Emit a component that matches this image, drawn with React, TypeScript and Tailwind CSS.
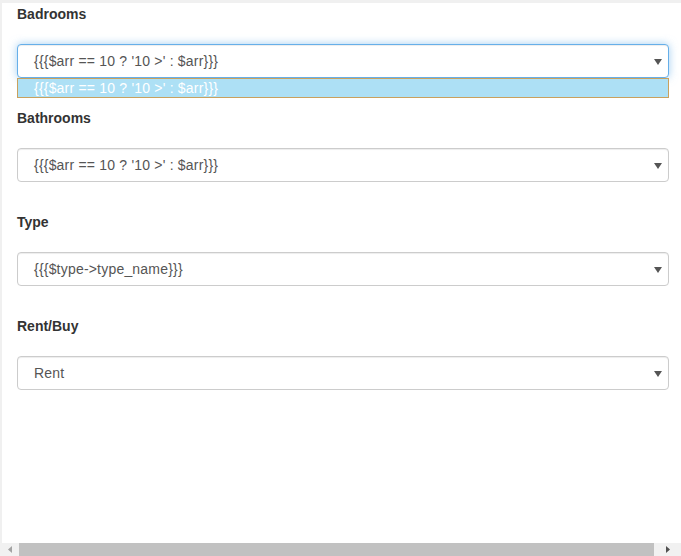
import React from 'react';

interface FieldProps {
  label: string;
  value: string;
  focused?: boolean;
  option?: string;
}

const Caret: React.FC = () => (
  <svg width="8" height="6" viewBox="0 0 8 6" className="absolute right-[6px] top-[14px]">
    <path d="M0 0 L8 0 L4 6 Z" fill="#555" />
  </svg>
);

const SelectField: React.FC<FieldProps> = ({ label, value, focused, option }) => (
  <div className="mb-[30px]">
    <div className="h-[20px] text-[14px] leading-[20px] font-bold text-[#333] mb-[20px]">{label}</div>
    <div className="relative">
      <div
        className={`relative h-[34px] rounded-[4px] border bg-white pl-[16px] text-[14px] leading-[32px] tracking-[0.2px] text-[#555] ${
          focused
            ? 'border-[#66afe9] shadow-[0_0_8px_rgba(102,175,233,0.6),inset_0_1px_1px_rgba(0,0,0,0.075)]'
            : 'border-[#ccc] shadow-[inset_0_1px_1px_rgba(0,0,0,0.075)]'
        }`}
      >
        {value}
        <Caret />
      </div>
      {option && (
        <div className="absolute left-0 right-0 top-[34px] h-[20px] border border-[#c9a15d] bg-[#ade0f5] pl-[16px] text-[14px] leading-[18px] tracking-[0.2px] text-white">
          {option}
        </div>
      )}
    </div>
  </div>
);

export default function App() {
  const arr = "{{{$arr == 10 ? '10 >' : $arr}}}";
  return (
    <div
      className="relative h-[556px] w-[681px] overflow-hidden bg-[#f0f0f0]"
      style={{ fontFamily: '"Liberation Sans", Arial, sans-serif' }}
    >
      <div className="absolute left-[2px] right-0 top-[3px] bottom-[13px] bg-white pl-[15px] pr-[12px] pt-[1px]">
        <SelectField label="Badrooms" value={arr} focused option={arr} />
        <SelectField label="Bathrooms" value={arr} />
        <SelectField label="Type" value="{{{$type->type_name}}}" />
        <SelectField label="Rent/Buy" value="Rent" />
      </div>
      {/* horizontal scrollbar */}
      <div className="absolute bottom-0 left-0 right-0 flex h-[13px] items-center bg-[#f1f1f1]">
        <div className="flex w-[19px] justify-center">
          <svg width="4" height="7" viewBox="0 0 4 7">
            <path d="M4 0 L0 3.5 L4 7 Z" fill="#a3a3a3" />
          </svg>
        </div>
        <div className="h-[13px] w-[635px] bg-[#c1c1c1]" />
        <div className="flex flex-1 justify-center">
          <svg width="4" height="7" viewBox="0 0 4 7">
            <path d="M0 0 L4 3.5 L0 7 Z" fill="#505050" />
          </svg>
        </div>
      </div>
    </div>
  );
}
